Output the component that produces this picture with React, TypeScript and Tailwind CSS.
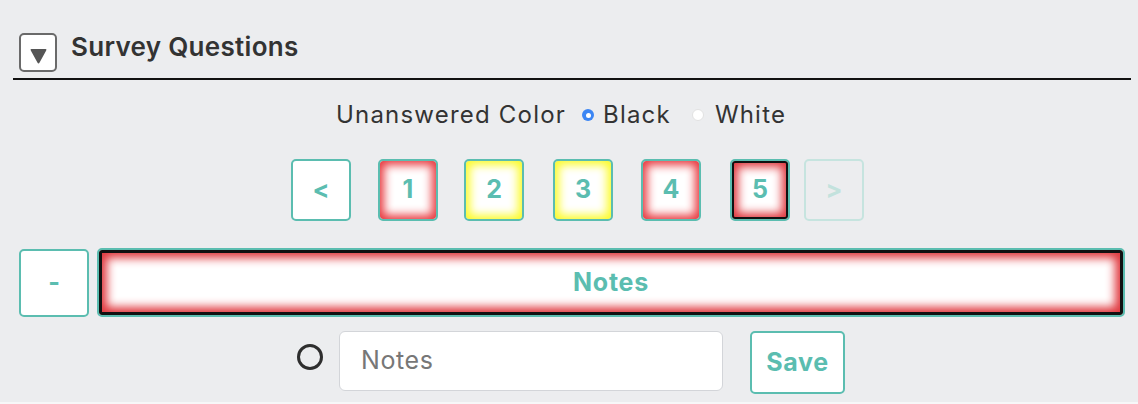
import React from "react";

function PageBtn({ label, kind }: { label: string; kind: "plain" | "red" | "yellow" | "current" | "disabled" }) {
  const base =
    "flex items-center justify-center w-[60px] h-[62px] rounded-[5px] border-2 text-[25px] font-bold";
  if (kind === "disabled") {
    return (
      <div className={`${base} border-[#c6e4df] text-[#c3e2dd] bg-transparent`}>{label}</div>
    );
  }
  const sh =
    kind === "red"
      ? "shadow-[inset_0_0_10px_4px_#e8393f]"
      : kind === "yellow"
      ? "shadow-[inset_0_0_10px_4px_#fbfb2a]"
      : kind === "current"
      ? "shadow-[inset_0_0_0_2px_#111,inset_0_0_10px_6px_#e0393f]"
      : "";
  return (
    <div className={`${base} border-[#5bbdb0] text-[#5bbdb0] bg-white ${sh}`}>{label}</div>
  );
}

export default function App() {
  return (
    <div
      className="w-[1138px] h-[404px] bg-[#ecedef] overflow-hidden flex flex-col text-[#333]"
      style={{ fontFamily: "Inter, 'Liberation Sans', sans-serif" }}
    >
      {/* header */}
      <div className="flex items-start pl-[19px] pt-[33px]">
        <div className="w-[38px] h-[39px] border-2 border-[#6a6a6a] rounded-[5px] bg-white flex items-end justify-center pb-[5px]">
          <svg width="19" height="18" viewBox="0 0 19 18">
            <path d="M2.5 2 L16.5 2 Q18 2 17.2 3.4 L10.6 15.6 Q9.5 17.4 8.4 15.6 L1.8 3.4 Q1 2 2.5 2 Z" fill="#555" />
          </svg>
        </div>
        <div className="ml-[14px] mt-[1px] text-[26px] font-semibold tracking-[0.3px] text-[#333] leading-[26px]">Survey Questions</div>
      </div>
      <div className="ml-[13px] mt-[6px] w-[1118px] h-[2px] bg-[#111]" />

      {/* unanswered color */}
      <div className="flex items-center pl-[336px] mt-[21px] h-[28px] text-[24px] tracking-[1.2px] text-[#333]">
        <span className="mr-[16px]">Unanswered Color</span>
        <span className="w-[12px] h-[12px] rounded-full bg-[#3c86f4] flex items-center justify-center mr-[9px]">
          <span className="w-[5px] h-[5px] rounded-full bg-white" />
        </span>
        <span className="mr-[21px]">Black</span>
        <span className="w-[12px] h-[12px] rounded-full bg-white border border-[#e2e2e2] mr-[11px]" />
        <span>White</span>
      </div>

      {/* pagination */}
      <div className="flex items-center pl-[291px] mt-[30px]">
        <PageBtn label="<" kind="plain" />
        <div className="ml-[27px]"><PageBtn label="1" kind="red" /></div>
        <div className="ml-[26px]"><PageBtn label="2" kind="yellow" /></div>
        <div className="ml-[29px]"><PageBtn label="3" kind="yellow" /></div>
        <div className="ml-[28px]"><PageBtn label="4" kind="red" /></div>
        <div className="ml-[29px]"><PageBtn label="5" kind="current" /></div>
        <div className="ml-[14px]"><PageBtn label=">" kind="disabled" /></div>
      </div>

      {/* notes row */}
      <div className="flex items-center pl-[19px] mt-[27px] gap-[8px]">
        <div className="w-[70px] h-[68px] rounded-[5px] border-2 border-[#5bbdb0] bg-white flex items-center justify-center text-[25px] font-bold text-[#5bbdb0]">
          -
        </div>
        <div className="w-[1028px] h-[69px] rounded-[5px] border-2 border-[#5bbdb0] bg-white flex items-center justify-center text-[25px] tracking-[0.8px] font-bold text-[#5bbdb0] shadow-[inset_0_0_0_3px_#111,inset_0_0_10px_8px_#e0393f]">
          Notes
        </div>
      </div>

      {/* input row */}
      <div className="flex items-start pl-[297px] mt-[14px]">
        <div className="mt-[13px] w-[26px] h-[26px] rounded-full border-[3px] border-[#2e2e2e]" />
        <div className="ml-[16px] w-[384px] h-[60px] rounded-[6px] border-[1.5px] border-[#d3d5d9] bg-white flex items-center pl-[21px] text-[25px] tracking-[0.6px] text-[#777]">
          Notes
        </div>
        <div className="ml-[27px] w-[95px] h-[63px] rounded-[5px] border-2 border-[#5bbdb0] bg-white flex items-center justify-center text-[25px] tracking-[0.6px] font-bold text-[#5bbdb0]">
          Save
        </div>
      </div>
      <div className="mt-auto h-[2px] bg-[#f7f7f8]" />
    </div>
  );
}
